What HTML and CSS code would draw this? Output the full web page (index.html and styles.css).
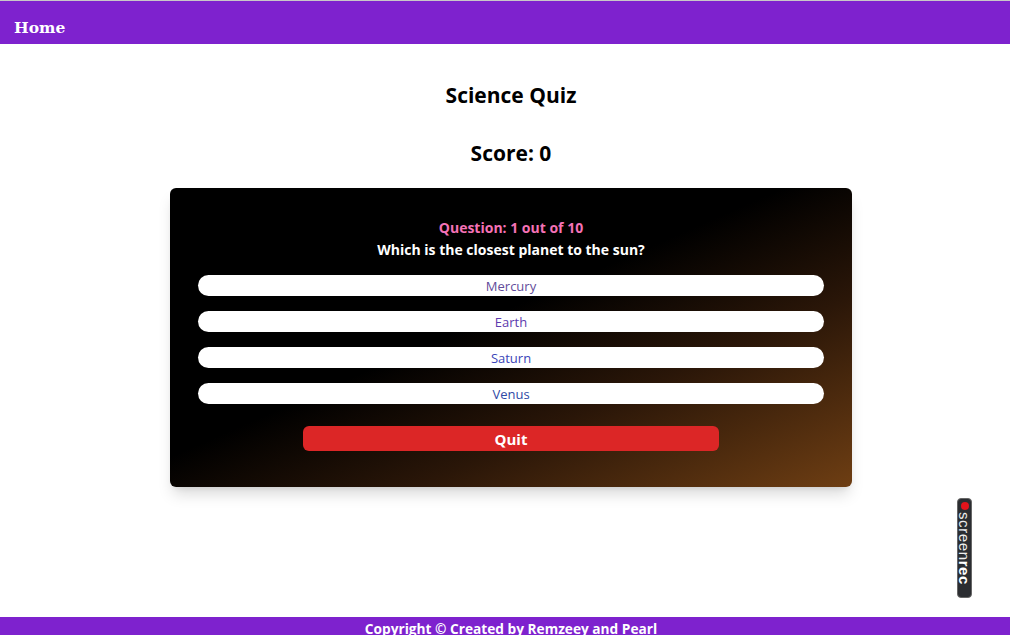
FILE: index.html
```html
<!DOCTYPE html>
<html>
<head>
<meta charset="utf-8">
<link rel="stylesheet" href="styles.css">
</head>
<body>
<div class="page">
  <nav class="navbar"><a class="home">Home</a></nav>
  <main class="main">
    <h1 class="title">Science Quiz</h1>
    <h2 class="score">Score: 0</h2>
    <section class="card">
      <p class="qnum">Question: 1 out of 10</p>
      <p class="qtext">Which is the closest planet to the sun?</p>
      <div class="options">
        <button class="option">Mercury</button>
        <button class="option">Earth</button>
        <button class="option">Saturn</button>
        <button class="option">Venus</button>
      </div>
      <button class="quit">Quit</button>
    </section>
  </main>
  <footer class="footer">Copyright © Created by Remzeey and Pearl</footer>
</div>
<div class="screenrec"><span class="dot"></span><span class="rec-text">screen<b>rec</b></span></div>
</body>
</html>
```
FILE: styles.css
```css
* { box-sizing: border-box; }
html, body { margin: 0; padding: 0; }
body {
  font-family: "Open Sans", "Noto Sans", sans-serif;
  background: #fff;
  color: #000;
  border-top: 1px solid #c8c8c8;
}
.page {
  height: 634px;
  display: flex;
  flex-direction: column;
}
.navbar {
  background: #7e22ce;
  height: 43px;
  display: flex;
  align-items: center;
  padding: 9px 14px 0;
}
.home {
  color: #fff;
  font-family: "DejaVu Serif", "Liberation Serif", serif;
  font-weight: bold;
  font-size: 15.5px;
}
.main {
  flex: 1;
  display: flex;
  flex-direction: column;
  align-items: center;
  padding-left: 12px;
}
.title {
  margin: 37px 0 0;
  font-size: 21px;
  font-weight: 700;
  line-height: 28px;
}
.score {
  margin: 30px 0 0;
  font-size: 21px;
  font-weight: 700;
  line-height: 28px;
}
.card {
  margin-top: 21px;
  width: 682px;
  height: 299px;
  border-radius: 6px;
  background: linear-gradient(to bottom right, #000 0%, #000 45%, #2a1608 68%, #6e3e13 100%);
  box-shadow: 0 10px 15px -3px rgba(0,0,0,0.15), 0 4px 6px -4px rgba(0,0,0,0.12);
  padding: 30px 28px 0;
  display: flex;
  flex-direction: column;
  align-items: center;
}
.qnum {
  margin: 0;
  color: #f472b6;
  font-weight: 700;
  font-size: 14px;
  line-height: 20px;
}
.qtext {
  margin: 2px 0 0;
  color: #fff;
  font-weight: 700;
  font-size: 14px;
  line-height: 20px;
}
.options {
  margin-top: 15px;
  width: 100%;
  display: flex;
  flex-direction: column;
  gap: 15px;
}
.option {
  height: 21px;
  width: 100%;
  border: 0;
  border-radius: 999px;
  background: #fff;
  font-family: "Open Sans", "Noto Sans", sans-serif;
  font-size: 13px;
  line-height: 21px;
  padding: 1px 0 0;
}
.option:nth-child(1) { color: #624c9a; }
.option:nth-child(2) { color: #5d3aae; }
.option:nth-child(3) { color: #3a44b8; }
.option:nth-child(4) { color: #2f4aa6; }
.quit {
  margin-top: 22px;
  width: 416px;
  height: 25px;
  border: 0;
  border-radius: 6px;
  background: #dc2626;
  color: #fff;
  font-family: "Open Sans", "Noto Sans", sans-serif;
  font-weight: 700;
  font-size: 15px;
  padding: 0;
}
.footer {
  background: #7e22ce;
  color: #fff;
  height: 18px;
  font-weight: 700;
  font-size: 13.7px;
  line-height: 23px;
  padding-left: 12px;
  text-align: center;
  overflow: hidden;
}
.screenrec {
  position: absolute;
  left: 957px;
  top: 498px;
  width: 15px;
  height: 100px;
  background: #2b2d31;
  border: 1px solid #666;
  border-radius: 4px;
  display: flex;
  flex-direction: column;
  align-items: center;
}
.dot {
  width: 8px;
  height: 8px;
  border-radius: 50%;
  background: #e3141b;
  margin-top: 3px;
  flex: none;
}
.rec-text {
  writing-mode: vertical-rl;
  color: #eee;
  font-family: "Liberation Sans", Arial, sans-serif;
  font-size: 15px;
  letter-spacing: 0.6px;
  line-height: 13px;
  margin-top: 2px;
}
.rec-text b { font-weight: 700; color: #fff; }
```
